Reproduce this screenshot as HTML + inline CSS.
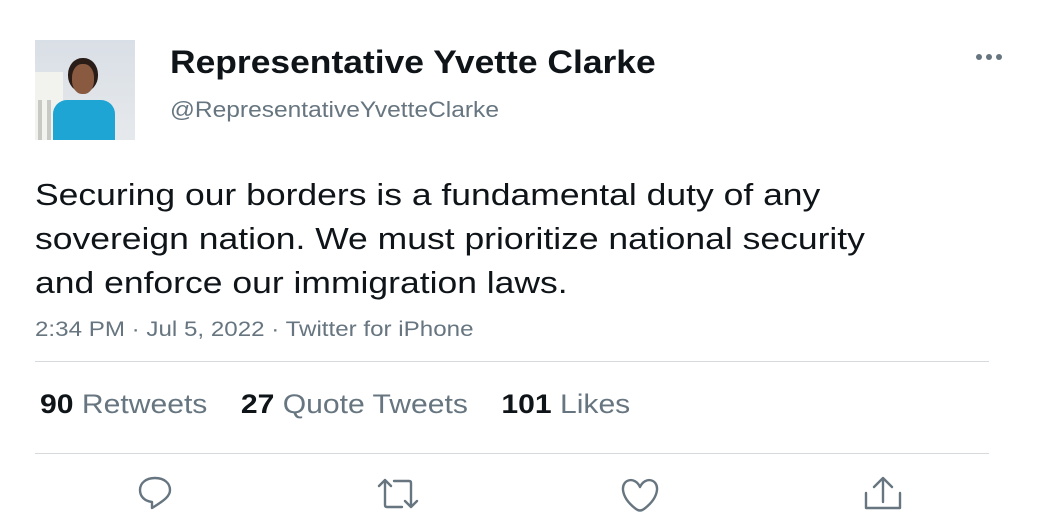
<!DOCTYPE html>
<html><head><meta charset="utf-8"><style>
body{margin:0;width:1050px;height:525px;background:#fff;font-family:"Liberation Sans",sans-serif;position:relative;overflow:hidden}
.a{position:absolute;transform-origin:0 0;white-space:nowrap}
</style></head><body>
<div class="a" style="left:35px;top:40px;width:100px;height:100px;background:linear-gradient(#d9dfe6,#e6e9ec);overflow:hidden">
 <div class="a" style="left:0;top:32px;width:28px;height:68px;background:#f2f2ef"></div>
 <div class="a" style="left:3px;top:60px;width:4px;height:40px;background:#c8c8c4"></div>
 <div class="a" style="left:12px;top:60px;width:4px;height:40px;background:#c8c8c4"></div>
 <div class="a" style="left:33px;top:18px;width:30px;height:34px;border-radius:48%;background:#2a1d18"></div>
 <div class="a" style="left:37px;top:24px;width:22px;height:30px;border-radius:45%;background:#8a5a40"></div>
 <div class="a" style="left:18px;top:60px;width:62px;height:45px;border-radius:14px 14px 0 0;background:#1ea5d3"></div>
</div>
<div class="a" style="left:170px;top:44px;font-size:32px;font-weight:bold;color:#0f1419;transform:scaleX(1.107)">Representative Yvette Clarke</div>
<div class="a" style="left:170px;top:97px;font-size:22px;color:#66757f;transform:scaleX(1.115)">@RepresentativeYvetteClarke</div>
<svg class="a" style="left:975px;top:50px" width="30" height="14"><circle cx="4" cy="7" r="3" fill="#66757f"/><circle cx="14" cy="7" r="3" fill="#66757f"/><circle cx="24" cy="7" r="3" fill="#66757f"/></svg>
<div class="a" style="left:35px;top:173px;font-size:31px;line-height:44px;color:#0f1419;transform:scaleX(1.145)">Securing our borders is a fundamental duty of any<br>sovereign nation. We must prioritize national security<br>and enforce our immigration laws.</div>
<div class="a" style="left:35px;top:318px;font-size:21px;color:#66757f;transform:scaleX(1.15)">2:34 PM · Jul 5, 2022 · Twitter for iPhone</div>
<div class="a" style="left:35px;top:361px;width:954px;height:1px;background:#d6dadd"></div>
<div class="a" style="left:40px;top:389px;font-size:27px;color:#66757f;transform:scaleX(1.115)"><b style="color:#0f1419">90</b> Retweets<span style="margin-left:30px"><b style="color:#0f1419">27</b> Quote Tweets</span><span style="margin-left:30px"><b style="color:#0f1419">101</b> Likes</span></div>
<div class="a" style="left:35px;top:453px;width:954px;height:1px;background:#d6dadd"></div>
<svg class="a" style="left:132px;top:472px" width="800" height="45" fill="none" stroke="#66757f" stroke-width="2.4" stroke-linecap="round" stroke-linejoin="round">
 <path d="M20 36 L20 30 C12 29 8 24 8 18 C8 11 14 6 23 6 C32 6 38 11 38 18 C38 24 33 28 20 36Z"/>
 <path d="M247 14 L253 8 L259 14 M253 8 L253 33 Q253 35 255 35 L270 35 M262 9 L277 9 Q279 9 279 11 L279 35 M273 29 L279 35 L285 29"/>
 <path d="M508 15 C503 4 490 7 491 18 C492 27 500 34 504 37 Q508 40 512 37 C516 34 524 27 525 18 C526 7 513 4 508 15Z"/>
 <path d="M751 30 L751 7 M742 15 L751 6 L760 15 M734 21 L734 36 L768 36 L768 21"/>
</svg>
</body></html>
